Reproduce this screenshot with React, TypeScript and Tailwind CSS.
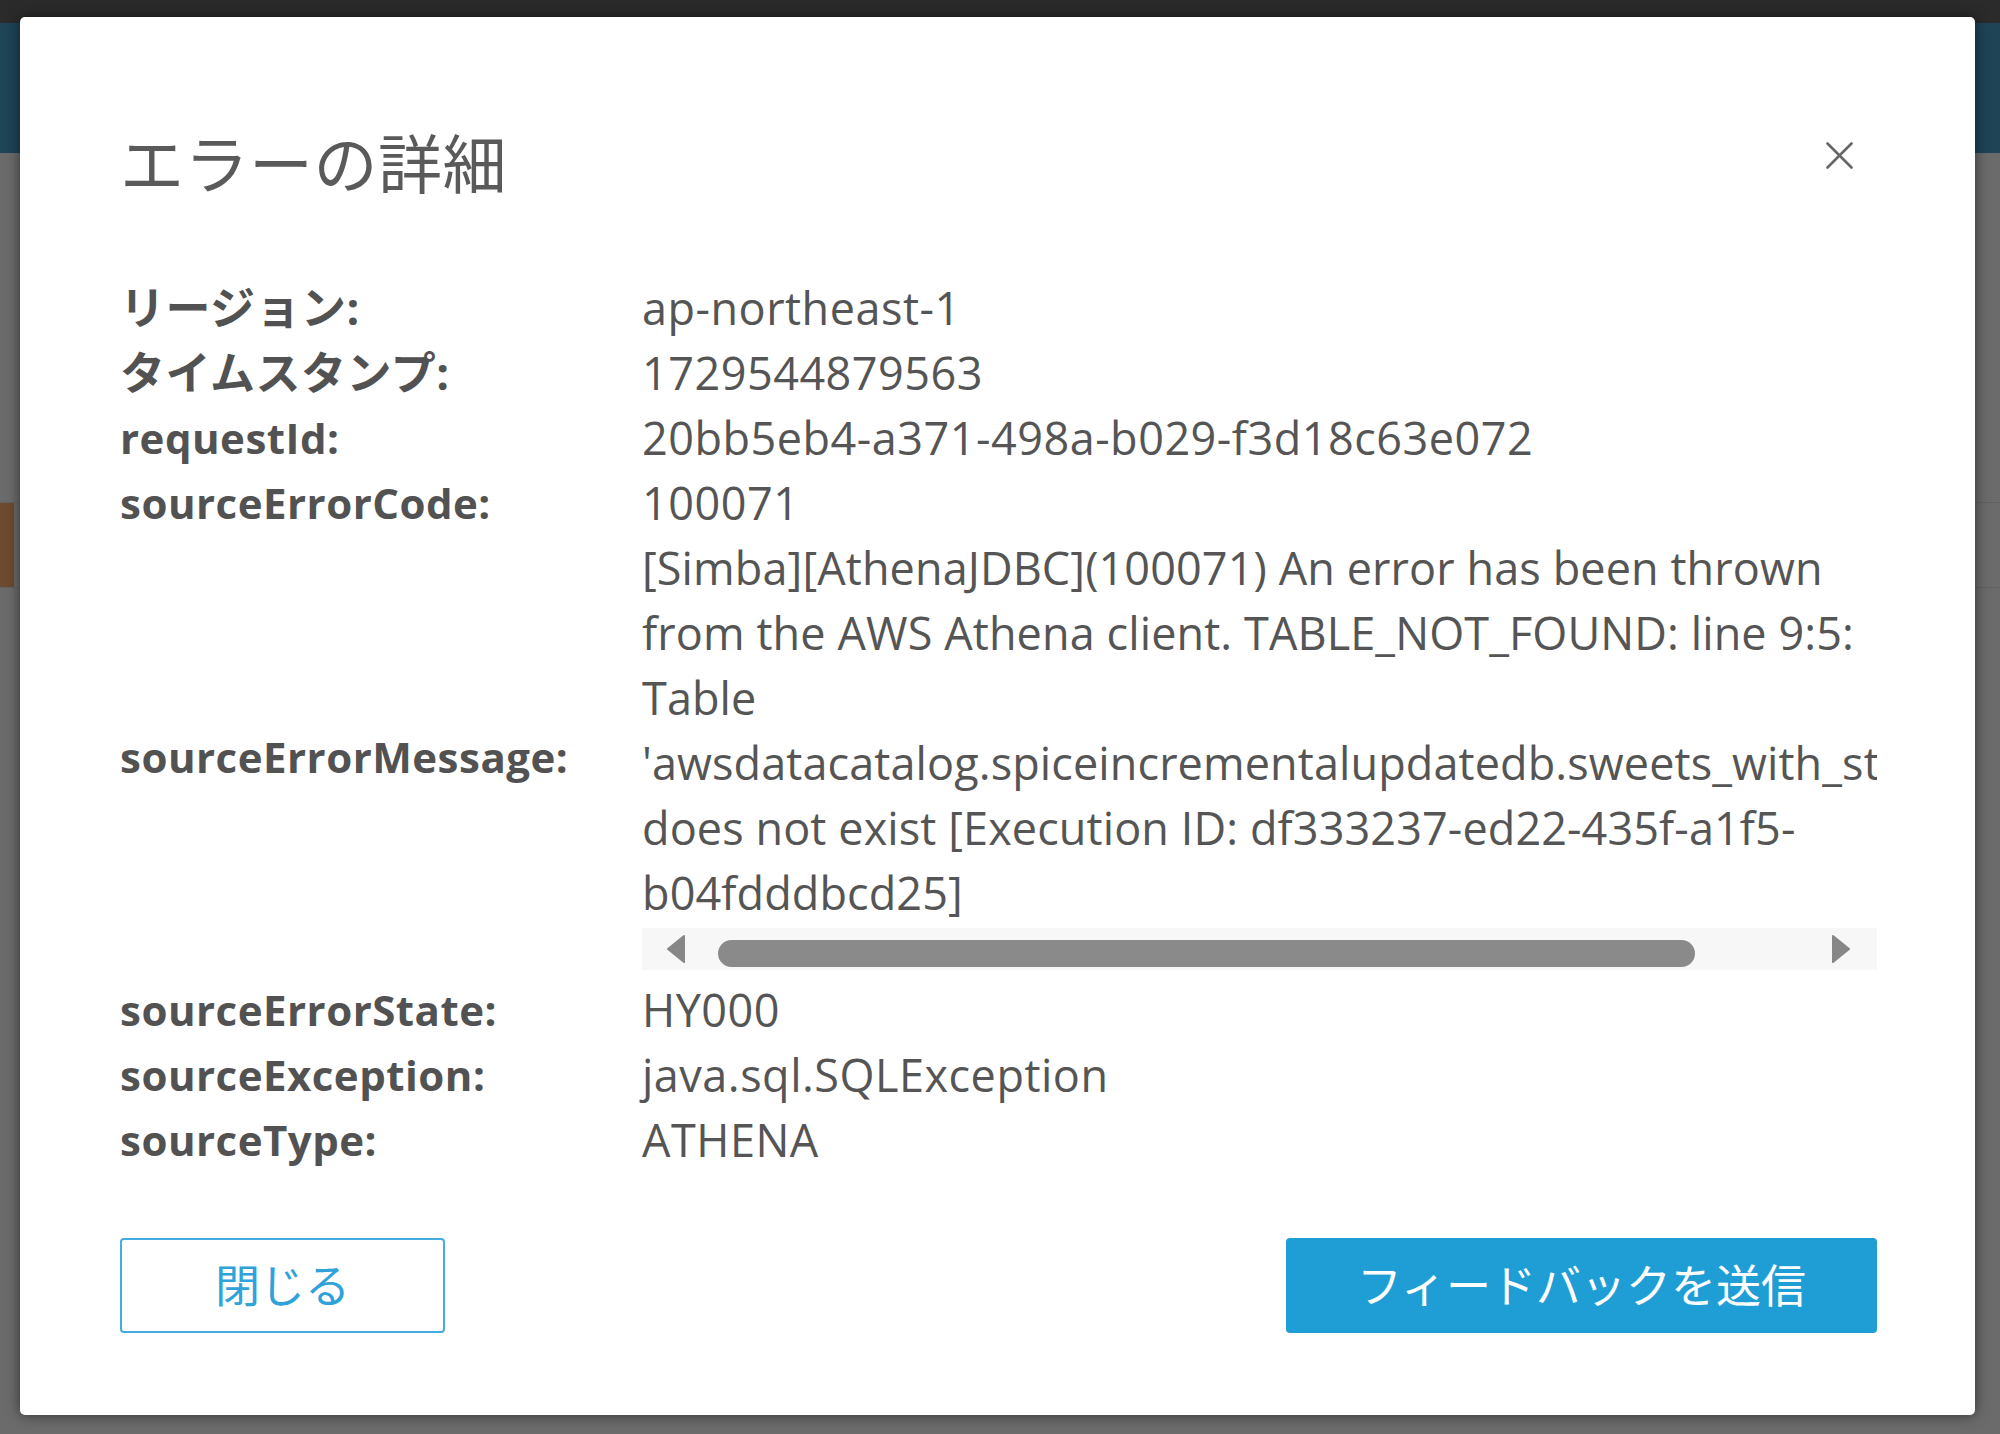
import React from "react";

const details: { label: string; value: string }[] = [
  { label: "リージョン:", value: "ap-northeast-1" },
  { label: "タイムスタンプ:", value: "1729544879563" },
  { label: "requestId:", value: "20bb5eb4-a371-498a-b029-f3d18c63e072" },
  { label: "sourceErrorCode:", value: "100071" },
];

const trailing: { label: string; value: string }[] = [
  { label: "sourceErrorState:", value: "HY000" },
  { label: "sourceException:", value: "java.sql.SQLException" },
  { label: "sourceType:", value: "ATHENA" },
];

const messageLines = [
  "[Simba][AthenaJDBC](100071) An error has been thrown",
  "from the AWS Athena client. TABLE_NOT_FOUND: line 9:5:",
  "Table",
  "'awsdatacatalog.spiceincrementalupdatedb.sweets_with_stats'",
  "does not exist [Execution ID: df333237-ed22-435f-a1f5-",
  "b04fdddbcd25]",
];

// latin labels render a little smaller than the japanese ones
const labelClass = (label: string) =>
  /^[a-z]/i.test(label)
    ? "font-bold text-[42px] text-[#525252]"
    : "font-bold text-[45px] text-[#525252]";

const Row = ({ label, value }: { label: string; value: string }) => (
  <>
    <div className={labelClass(label)}>{label}</div>
    <div className="whitespace-nowrap">{value}</div>
  </>
);

const FakeScrollbar = () => (
  <div className="pt-[3px] pb-[7px]">
    <div className="flex h-[42px] items-center bg-[#f7f7f7] pl-[24px] pr-[26px]">
      <svg width="20" height="28" viewBox="0 0 20 28" className="shrink-0">
        <polygon points="18,1 2,14 18,27" fill="#878787" stroke="#878787" strokeWidth="2" strokeLinejoin="round" />
      </svg>
      <div className="ml-[32px] mt-[8px] h-[27px] w-[977px] rounded-full bg-[#8a8a8a]" />
      <div className="flex-1" />
      <svg width="20" height="28" viewBox="0 0 20 28" className="shrink-0">
        <polygon points="2,1 18,14 2,27" fill="#878787" stroke="#878787" strokeWidth="2" strokeLinejoin="round" />
      </svg>
    </div>
  </div>
);

export default function App() {
  return (
    <div className="relative h-[1434px] w-[2000px] overflow-hidden bg-[#6b6b6b] font-['Open_Sans','Noto_Sans_CJK_JP',sans-serif]">
      {/* dimmed app behind the dialog */}
      <div className="h-[23px] bg-[#2b2b2b]" />
      <div className="h-[130px] bg-[#1e4456]" />
      <div className="h-[350px] border-b border-[#626262]" />
      <div className="flex h-[84px] items-stretch">
        <div className="w-[14px] bg-[#6e4a2e]" />
      </div>
      <div className="h-[160px] border-t border-[#636363]" />

      <div className="absolute left-[20px] top-[17px] flex h-[1398px] w-[1955px] flex-col rounded-[5px] bg-white pl-[100px] pr-[98px] pt-[108px] text-[#555] shadow-[0_0_14px_rgba(0,0,0,0.55)]">
        <div className="flex items-start justify-between">
          <h2 className="text-[64px] font-normal leading-[77px] tracking-[0.5px] text-[#5a5a5a]">エラーの詳細</h2>
          <svg width="27" height="27" viewBox="0 0 27 27" className="mr-[24px] mt-[17px]">
            <path d="M1.5 1.5 L25.5 25.5 M25.5 1.5 L1.5 25.5" stroke="#666" strokeWidth="2.6" strokeLinecap="round" />
          </svg>
        </div>

        <div className="mt-[73px] grid grid-cols-[522px_1fr] text-[45px] leading-[65px] tracking-[0.5px]">
          {details.map((d) => (
            <Row key={d.label} {...d} />
          ))}

          <div className="self-center text-[42px] font-bold text-[#525252]">sourceErrorMessage:</div>
          <div className="min-w-0 overflow-hidden">
            {messageLines.map((line) => (
              <div key={line} className="whitespace-nowrap tracking-[0.1px]">
                {line}
              </div>
            ))}
            <FakeScrollbar />
          </div>

          {trailing.map((d) => (
            <Row key={d.label} {...d} />
          ))}
        </div>

        <div className="mt-[66px] flex items-center justify-between">
          <button className="flex h-[95px] w-[325px] items-center justify-center rounded-[4px] border-2 border-[#43ace0] bg-white text-[45px] text-[#2ea2d9]">
            閉じる
          </button>
          <button className="flex h-[95px] w-[591px] items-center justify-center rounded-[4px] bg-[#1f9ed6] text-[45px] text-white">
            フィードバックを送信
          </button>
        </div>
      </div>
    </div>
  );
}
